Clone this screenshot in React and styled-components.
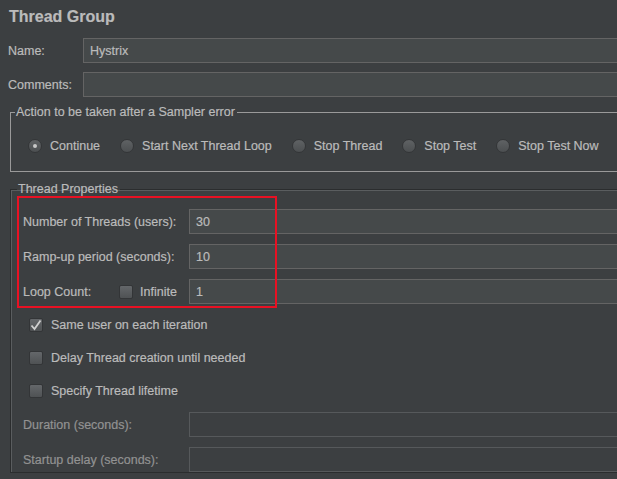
import styled, { createGlobalStyle } from "styled-components";

const GlobalStyle = createGlobalStyle`
  html, body {
    margin: 0;
    padding: 0;
    background: #3c3f41;
    overflow: hidden;
  }
  body {
    font-family: "Liberation Sans", Arial, sans-serif;
    font-size: 12.5px;
    color: #bbbbbb;
    -webkit-text-stroke: 0.2px currentColor;
  }
`;

const Page = styled.div`
  width: 660px;
  height: 479px;
  padding: 7px 0 0 0;
  box-sizing: border-box;
  background: #3c3f41;
`;

const Title = styled.h1`
  margin: 0 0 11px 9px;
  font-size: 16px;
  font-weight: bold;
  line-height: 20px;
  color: #bbbbbb;
`;

const TopForm = styled.div`
  display: grid;
  grid-template-columns: 75px 1fr;
  row-gap: 9px;
  padding-left: 8px;
  align-items: center;
`;

const Label = styled.label`
  color: ${(p) => (p.$disabled ? "#929292" : "#bbbbbb")};
  white-space: nowrap;
  display: flex;
  align-items: center;
`;

const TextInput = styled.div`
  height: 25px;
  box-sizing: border-box;
  border: 1px solid ${(p) => (p.$disabled ? "#56595b" : "#646464")};
  background: ${(p) => (p.$disabled ? "#3c3f41" : "#45494a")};
  color: #bbbbbb;
  padding: 0 6px;
  display: flex;
  align-items: center;
`;

const Group = styled.fieldset`
  margin: ${(p) => p.$margin};
  padding: ${(p) => p.$padding};
  border: 1px solid #9a9a9a;
  min-width: 0;
`;

const EtchedGroup = styled(Group)`
  border: 1px solid #2b2d2e;
  box-shadow: inset 1px 1px 0 #5a5d5f;
`;

const Legend = styled.legend`
  padding: 0 2px 0 1px;
  line-height: 15px;
  color: #bbbbbb;
  margin-left: ${(p) => p.$offset || 0}px;
`;

const RadioRow = styled.div`
  display: flex;
  align-items: center;
  height: 16px;
  margin: 18px 0 0 13px;
  gap: 20px;
`;

const Option = styled.label`
  display: flex;
  align-items: center;
  gap: 8px;
  white-space: nowrap;
`;

const RadioDot = styled.span`
  width: 14px;
  height: 14px;
  border-radius: 50%;
  box-sizing: border-box;
  border: 1px solid #343638;
  background: linear-gradient(#5f6264, #4c4f51);
  display: flex;
  align-items: center;
  justify-content: center;

  &::after {
    content: "";
    width: 4px;
    height: 4px;
    border-radius: 50%;
    background: ${(p) => (p.$checked ? "#c8c8c8" : "transparent")};
  }
`;

const Box = styled.span`
  width: 14px;
  height: 14px;
  border-radius: 2px;
  box-sizing: border-box;
  border: 1px solid #333537;
  background: linear-gradient(#64676a, #4f5254);
  display: flex;
  align-items: center;
  justify-content: center;
  flex: none;
`;

const Highlighted = styled.div`
  position: relative;
`;

const RedFrame = styled.div`
  position: absolute;
  left: -6px;
  top: -13px;
  width: 260px;
  height: 112px;
  box-sizing: border-box;
  border: 2px solid #e81123;
  pointer-events: none;
`;

const PropsForm = styled.div`
  display: grid;
  grid-template-columns: 166px 1fr;
  row-gap: 10px;
  align-items: center;
`;

const LoopLabel = styled.div`
  display: flex;
  align-items: center;
`;

const LoopText = styled.span`
  width: 96px;
`;

const InfiniteOption = styled(Option)`
  gap: 7px;
`;

const CheckList = styled.div`
  margin-top: 4px;
  padding-left: 6px;
`;

const CheckRow = styled.label`
  display: flex;
  align-items: center;
  gap: 8px;
  height: 33px;
`;

const LifetimeForm = styled(PropsForm)`
  margin-top: 5px;
`;

const Check = ({ checked }) => (
  <Box>
    {checked && (
      <svg width="12" height="12" viewBox="0 0 12 12">
        <path d="M1.5 6.5 L4.5 10 L10.5 1.5" fill="none" stroke="#d0d0d0" strokeWidth="1.8" />
      </svg>
    )}
  </Box>
);

const actions = ["Continue", "Start Next Thread Loop", "Stop Thread", "Stop Test", "Stop Test Now"];

export default function App() {
  return (
    <Page>
      <GlobalStyle />
      <Title>Thread Group</Title>
      <TopForm>
        <Label>Name:</Label>
        <TextInput>Hystrix</TextInput>
        <Label>Comments:</Label>
        <TextInput />
      </TopForm>

      <Group $margin="8px 0 0 10px" $padding="0 0 17px 4px">
        <Legend>Action to be taken after a Sampler error</Legend>
        <RadioRow>
          {actions.map((a, i) => (
            <Option key={a}>
              <RadioDot $checked={i === 0} />
              {a}
            </Option>
          ))}
        </RadioRow>
      </Group>

      <EtchedGroup $margin="10px 0 0 10px" $padding="12px 0 0 12px">
        <Legend $offset={-6}>Thread Properties</Legend>
        <Highlighted>
          <RedFrame />
          <PropsForm>
            <Label>Number of Threads (users):</Label>
            <TextInput>30</TextInput>
            <Label>Ramp-up period (seconds):</Label>
            <TextInput>10</TextInput>
            <LoopLabel>
              <LoopText>Loop Count:</LoopText>
              <InfiniteOption>
                <Check />
                Infinite
              </InfiniteOption>
            </LoopLabel>
            <TextInput>1</TextInput>
          </PropsForm>
        </Highlighted>

        <CheckList>
          <CheckRow>
            <Check checked />
            Same user on each iteration
          </CheckRow>
          <CheckRow>
            <Check />
            Delay Thread creation until needed
          </CheckRow>
          <CheckRow>
            <Check />
            Specify Thread lifetime
          </CheckRow>
        </CheckList>

        <LifetimeForm>
          <Label $disabled>Duration (seconds):</Label>
          <TextInput $disabled />
          <Label $disabled>Startup delay (seconds):</Label>
          <TextInput $disabled />
        </LifetimeForm>
      </EtchedGroup>
    </Page>
  );
}
